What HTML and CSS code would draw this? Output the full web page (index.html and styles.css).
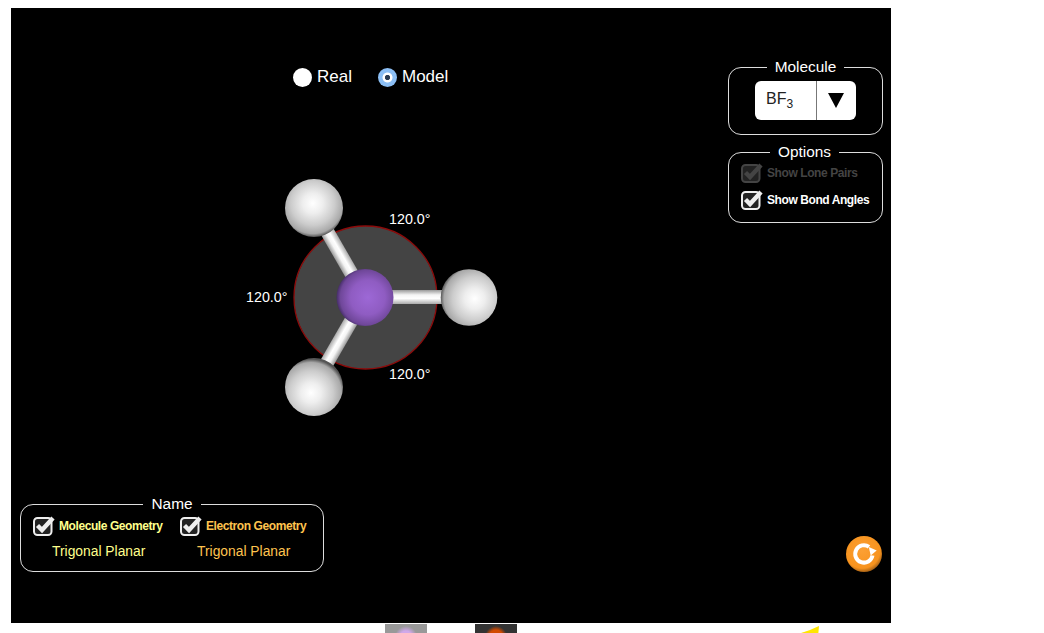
FILE: index.html
```html
<!DOCTYPE html>
<html lang="en">
<head>
<meta charset="utf-8">
<title>Molecule Shapes</title>
<link rel="stylesheet" href="styles.css">
</head>
<body>
<svg class="defs" width="0" height="0" aria-hidden="true">
  <defs>
    <symbol id="check" viewBox="0 0 22 20">
      <rect x="1" y="2" width="17.5" height="17" rx="3.5" fill="#222" stroke="currentColor" stroke-width="2"/>
      <path d="M4.5 9.5 9 14 20 2" fill="none" stroke="currentColor" stroke-width="4.4"/>
    </symbol>
  </defs>
</svg>
<main class="stage">
  <svg class="molecule" viewBox="11 8 880 615" width="880" height="615">
    <defs>
      <radialGradient id="atomA" cx="0.48" cy="0.42" r="0.58">
        <stop offset="0" stop-color="#fff"/>
        <stop offset="0.3" stop-color="#eee"/>
        <stop offset="0.65" stop-color="#ccc"/>
        <stop offset="0.9" stop-color="#a8a8a8"/>
        <stop offset="1" stop-color="#555"/>
      </radialGradient>
      <radialGradient id="atomB" cx="0.6" cy="0.52" r="0.6">
        <stop offset="0" stop-color="#fff"/>
        <stop offset="0.3" stop-color="#eee"/>
        <stop offset="0.65" stop-color="#ccc"/>
        <stop offset="0.9" stop-color="#a8a8a8"/>
        <stop offset="1" stop-color="#555"/>
      </radialGradient>
      <radialGradient id="atomC" cx="0.45" cy="0.6" r="0.58">
        <stop offset="0" stop-color="#fff"/>
        <stop offset="0.3" stop-color="#eee"/>
        <stop offset="0.65" stop-color="#ccc"/>
        <stop offset="0.9" stop-color="#a8a8a8"/>
        <stop offset="1" stop-color="#555"/>
      </radialGradient>
      <radialGradient id="center" cx="0.55" cy="0.5" r="0.55">
        <stop offset="0" stop-color="#9d68d6"/>
        <stop offset="0.55" stop-color="#8f5cc2"/>
        <stop offset="0.88" stop-color="#6f4799"/>
        <stop offset="1" stop-color="#442d66"/>
      </radialGradient>
      <linearGradient id="bond" x1="0" y1="0" x2="0" y2="1">
        <stop offset="0" stop-color="#999"/>
        <stop offset="0.35" stop-color="#f4f4f4"/>
        <stop offset="0.6" stop-color="#fff"/>
        <stop offset="1" stop-color="#aaa"/>
      </linearGradient>
    </defs>
    <circle cx="365.5" cy="297.5" r="71.5" fill="#444" stroke="#8c0b0b" stroke-width="1.3"/>
    <g transform="translate(365 297)">
      <rect x="20" y="-7" width="80" height="14" fill="url(#bond)"/>
      <rect x="20" y="-7" width="80" height="14" fill="url(#bond)" transform="rotate(-120)"/>
      <rect x="20" y="-7" width="80" height="14" fill="url(#bond)" transform="rotate(120)"/>
    </g>
    <circle cx="314" cy="208" r="29" fill="url(#atomA)"/>
    <circle cx="469" cy="297.5" r="28.3" fill="url(#atomB)"/>
    <circle cx="314" cy="387" r="29" fill="url(#atomC)"/>
    <circle cx="365" cy="297.5" r="28.5" fill="url(#center)"/>
    <text class="angle" x="389" y="224">120.0°</text>
    <text class="angle" x="246" y="302">120.0°</text>
    <text class="angle" x="389" y="379">120.0°</text>
  </svg>

  <div class="top-row">
    <div class="modes">
      <label class="mode"><span class="dot"></span>Real</label>
      <label class="mode"><span class="dot dot-on"></span>Model</label>
    </div>
    <div class="side">
      <fieldset class="panel panel-molecule">
        <legend>Molecule</legend>
        <div class="select">
          <span class="select-value">BF<sub>3</sub></span>
          <span class="select-arrow"></span>
        </div>
      </fieldset>
      <fieldset class="panel panel-options">
        <legend>Options</legend>
        <label class="check check-off"><svg class="box"><use href="#check"/></svg>Show Lone Pairs</label>
        <label class="check"><svg class="box"><use href="#check"/></svg>Show Bond Angles</label>
      </fieldset>
    </div>
  </div>

  <div class="bottom-row">
    <fieldset class="panel panel-name">
      <legend>Name</legend>
      <div class="names">
        <div class="name name-molecule">
          <label class="check"><svg class="box"><use href="#check"/></svg><span>Molecule Geometry</span></label>
          <div class="value">Trigonal Planar</div>
        </div>
        <div class="name name-electron">
          <label class="check"><svg class="box"><use href="#check"/></svg><span>Electron Geometry</span></label>
          <div class="value">Trigonal Planar</div>
        </div>
      </div>
    </fieldset>
    <svg class="reset" viewBox="0 0 36 36" width="36" height="36" role="img" aria-label="Reset">
      <defs>
        <radialGradient id="orange" cx="0.45" cy="0.4" r="0.62">
          <stop offset="0" stop-color="#fca033"/>
          <stop offset="0.8" stop-color="#f7931e"/>
          <stop offset="1" stop-color="#9a5a14"/>
        </radialGradient>
      </defs>
      <circle cx="18" cy="18" r="18" fill="url(#orange)"/>
      <path d="M26.5 19.5A8.7 8.7 0 1 1 23 10.8" fill="none" stroke="#fff" stroke-width="4"/>
      <path d="M22.8 11 30.7 14.5 24.7 19.5Z" fill="#fff"/>
    </svg>
  </div>
</main>
<footer class="thumbs">
  <div class="thumb thumb-real"></div>
  <div class="thumb thumb-lone"></div>
  <svg class="arrow" viewBox="0 0 22 11" width="22" height="11" aria-hidden="true">
    <path d="M0 8 12 4 21 0 20 11H0Z" fill="#ffe600"/>
  </svg>
</footer>
</body>
</html>
```
FILE: styles.css
```css
html, body {
  height: 100%;
  overflow: hidden;
}

body {
  margin: 0;
  padding: 8px 0 0 11px;
  box-sizing: border-box;
  background: #fff;
  font-family: "Liberation Sans", Arial, sans-serif;
  color: #fff;
}

.defs {
  position: absolute;
}

.stage {
  position: relative;
  width: 880px;
  height: 615px;
  box-sizing: border-box;
  padding: 50px 8px 51px 9px;
  background: #000;
  display: flex;
  flex-direction: column;
  justify-content: space-between;
}

.molecule {
  position: absolute;
  left: 0;
  top: 0;
}

.angle {
  font-size: 14.3px;
  fill: #fff;
}

.top-row,
.bottom-row {
  position: relative;
  display: flex;
  justify-content: space-between;
  align-items: flex-start;
}

.bottom-row {
  align-items: flex-end;
}

.modes {
  display: flex;
  gap: 26.5px;
  margin: 9px 0 0 273px;
}

.mode {
  display: flex;
  align-items: center;
  gap: 5px;
  font-size: 17px;
  line-height: 20px;
}

.dot {
  width: 19px;
  height: 19px;
  border-radius: 50%;
  background: #fff;
}

.dot-on {
  margin-right: -0.5px;
  background: radial-gradient(circle, #2a3a50 0 2.2px, #fff 3px 4.6px, #8cbff5 5.4px);
}

.side {
  display: flex;
  flex-direction: column;
  gap: 8px;
  width: 155px;
}

.panel {
  margin: 0;
  min-width: 0;
  box-sizing: border-box;
  border: 1px solid #ddd;
  border-radius: 13px;
  padding: 0;
}

.panel legend {
  margin: 0 auto;
  padding: 0 8px 2px;
  font-size: 15.4px;
  line-height: 17px;
}

.panel-molecule {
  height: 77px;
  display: flex;
}

.select {
  display: flex;
  width: 101px;
  height: 39px;
  margin: 4px auto 0;
  border-radius: 6px;
  background: #fff;
  color: #222;
}

.select-value {
  width: 62px;
  box-sizing: border-box;
  padding: 7px 0 0 11px;
  border-right: 1px solid #777;
  font-size: 16px;
  line-height: 22px;
}

.select-value sub {
  font-size: 12px;
  line-height: 0;
}

.select-arrow {
  width: 0;
  height: 0;
  margin: 12px 0 0 11px;
  border-style: solid;
  border-width: 15px 8px 0;
  border-color: #000 transparent transparent;
}

.panel-options {
  height: 80px;
  padding: 1px 0 0 12px;
  display: flex;
  flex-direction: column;
  gap: 7px;
}

.panel-options legend {
  margin-left: 29px;
  margin-right: auto;
}

.check {
  display: flex;
  align-items: center;
  gap: 4px;
  font-size: 12px;
  letter-spacing: -0.42px;
  font-weight: bold;
  line-height: 20px;
}

.box {
  width: 22px;
  height: 20px;
  color: #eee;
}

.check-off {
  color: #444;
}

.check-off .box {
  color: #444;
}

.panel-name {
  width: 304px;
  height: 77px;
}

.names {
  display: flex;
  margin: 2px 0 0 12px;
}

.name-molecule {
  width: 147px;
  color: #ffff8c;
}

.name-electron {
  color: #ffc44f;
}

.value {
  margin-top: 6px;
  padding-left: 19px;
  font-size: 13.85px;
  line-height: 18px;
}

.name-electron .value {
  padding-left: 17px;
}

.reset {
  display: block;
  margin-right: 1px;
}

.thumbs {
  display: flex;
  align-items: flex-start;
  padding: 1px 0 0 374px;
  gap: 48px;
}

.thumb {
  width: 42px;
  height: 12px;
}

.thumb-real {
  background: radial-gradient(circle 11px at 50% 13px, #d0a8ea 0 6px, #999 11px);
}

.thumb-lone {
  background: radial-gradient(circle 11px at 50% 13px, #d24a00 0 7px, #333 11px);
}

.arrow {
  margin: 2px 0 0 233px;
}
```
